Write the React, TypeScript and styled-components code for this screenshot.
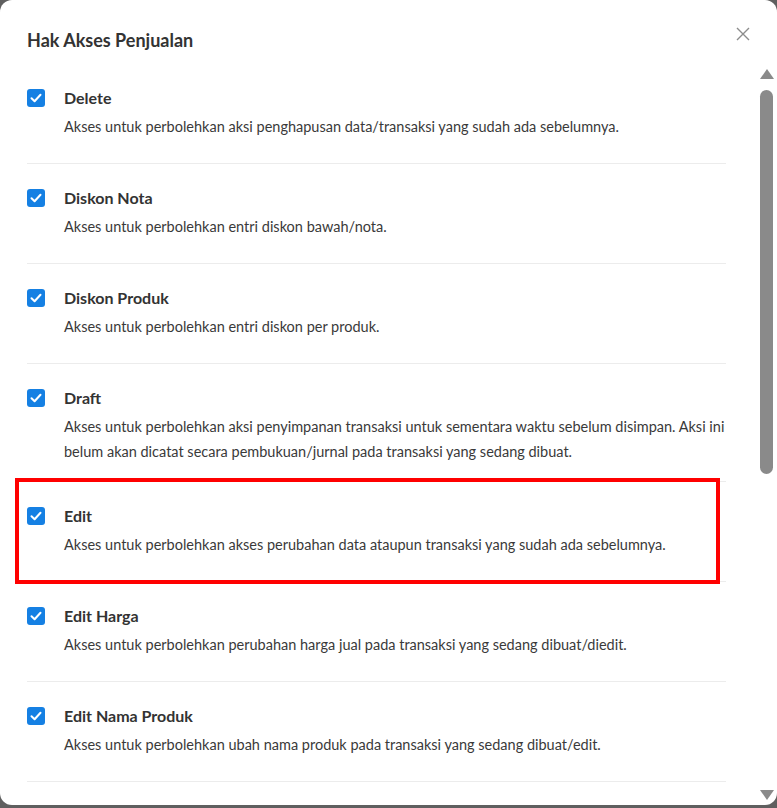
import React from 'react';
import styled, { createGlobalStyle } from 'styled-components';

const GlobalStyle = createGlobalStyle`
  html, body {
    margin: 0;
    padding: 0;
    height: 100%;
  }

  body {
    background: #5f5f5f;
    font-family: Lato, "Noto Sans", sans-serif;
    color: #333;
    -webkit-font-smoothing: antialiased;
  }
`;

const Modal = styled.div`
  height: 805px;
  background: #fff;
  border-radius: 12px;
  display: flex;
  flex-direction: column;
  overflow: hidden;
`;

const Header = styled.div`
  height: 64px;
  display: flex;
  align-items: flex-start;
  justify-content: space-between;
  padding: 29px 26px 0 27px;
  box-sizing: border-box;
  flex-shrink: 0;
`;

const Title = styled.h2`
  margin: 0;
  font-size: 18px;
  line-height: 22px;
  font-weight: 700;
  color: #333;
`;

const CloseButton = styled.button`
  width: 16px;
  height: 16px;
  padding: 0;
  margin-top: -3px;
  border: none;
  background: none;
  display: flex;
  align-items: center;
  justify-content: center;
  cursor: pointer;
`;

const Body = styled.div`
  flex: 1;
  min-height: 0;
  display: flex;
  overflow: hidden;
  padding-left: 27px;
  padding-right: 3px;
`;

const List = styled.div`
  width: 699px;
`;

const Row = styled.div<{ $highlighted?: boolean }>`
  position: relative;
  display: flex;
  gap: 19px;
  min-height: 100px;
  box-sizing: border-box;
  padding: 22px 0 17px;
  border-bottom: 1px solid #ececec;

  ${(p) =>
    p.$highlighted &&
    `
    &::after {
      content: '';
      position: absolute;
      left: -12px;
      top: -4px;
      width: 705px;
      height: 106px;
      box-sizing: border-box;
      border: 4px solid #ff0000;
      pointer-events: none;
    }
  `}
`;

const Check = styled.span`
  flex-shrink: 0;
  width: 18px;
  height: 18px;
  margin-top: 3px;
  border-radius: 3px;
  background: #1580e3;
  display: flex;
  align-items: center;
  justify-content: center;
`;

const Text = styled.div`
  flex: 1;
`;

const ItemTitle = styled.div`
  font-size: 16px;
  line-height: 24px;
  font-weight: 700;
  color: #333;
`;

const ItemDesc = styled.div`
  margin-top: 4px;
  font-size: 14.5px;
  line-height: 25px;
  color: #3a3a3a;
`;

const Scrollbar = styled.div`
  margin-left: auto;
  width: 15px;
  display: flex;
  flex-direction: column;
  align-items: center;
  padding-top: 5px;
  padding-bottom: 5px;
`;

const Arrow = styled.div<{ $down?: boolean }>`
  width: 0;
  height: 0;
  border-left: 7.5px solid transparent;
  border-right: 7.5px solid transparent;
  ${(p) =>
    p.$down
      ? 'border-top: 10px solid #8a8a8a; margin-top: auto;'
      : 'border-bottom: 10px solid #8a8a8a;'}
`;

const Thumb = styled.div`
  margin-top: 11px;
  width: 13px;
  height: 384px;
  border-radius: 7px;
  background: #8a8a8a;
`;

const CheckIcon = () => (
  <svg width="12" height="10" viewBox="0 0 12 10">
    <path
      d="M1.5 5.2 L4.6 8.2 L10.5 1.8"
      fill="none"
      stroke="#fff"
      strokeWidth="2"
      strokeLinecap="round"
      strokeLinejoin="round"
    />
  </svg>
);

const CloseIcon = () => (
  <svg width="14" height="14" viewBox="0 0 14 14">
    <path d="M1 1 L13 13 M13 1 L1 13" stroke="#8c8c8c" strokeWidth="1.4" />
  </svg>
);

const items = [
  {
    name: 'Delete',
    desc: 'Akses untuk perbolehkan aksi penghapusan data/transaksi yang sudah ada sebelumnya.',
  },
  {
    name: 'Diskon Nota',
    desc: 'Akses untuk perbolehkan entri diskon bawah/nota.',
  },
  {
    name: 'Diskon Produk',
    desc: 'Akses untuk perbolehkan entri diskon per produk.',
  },
  {
    name: 'Draft',
    desc: 'Akses untuk perbolehkan aksi penyimpanan transaksi untuk sementara waktu sebelum disimpan. Aksi ini belum akan dicatat secara pembukuan/jurnal pada transaksi yang sedang dibuat.',
  },
  {
    name: 'Edit',
    desc: 'Akses untuk perbolehkan akses perubahan data ataupun transaksi yang sudah ada sebelumnya.',
    highlighted: true,
  },
  {
    name: 'Edit Harga',
    desc: 'Akses untuk perbolehkan perubahan harga jual pada transaksi yang sedang dibuat/diedit.',
  },
  {
    name: 'Edit Nama Produk',
    desc: 'Akses untuk perbolehkan ubah nama produk pada transaksi yang sedang dibuat/edit.',
  },
];

export default function App() {
  return (
    <>
      <GlobalStyle />
      <Modal>
        <Header>
          <Title>Hak Akses Penjualan</Title>
          <CloseButton aria-label="Tutup">
            <CloseIcon />
          </CloseButton>
        </Header>
        <Body>
          <List>
            {items.map((item) => (
              <Row key={item.name} $highlighted={item.highlighted}>
                <Check>
                  <CheckIcon />
                </Check>
                <Text>
                  <ItemTitle>{item.name}</ItemTitle>
                  <ItemDesc>{item.desc}</ItemDesc>
                </Text>
              </Row>
            ))}
          </List>
          <Scrollbar>
            <Arrow />
            <Thumb />
            <Arrow $down />
          </Scrollbar>
        </Body>
      </Modal>
    </>
  );
}
